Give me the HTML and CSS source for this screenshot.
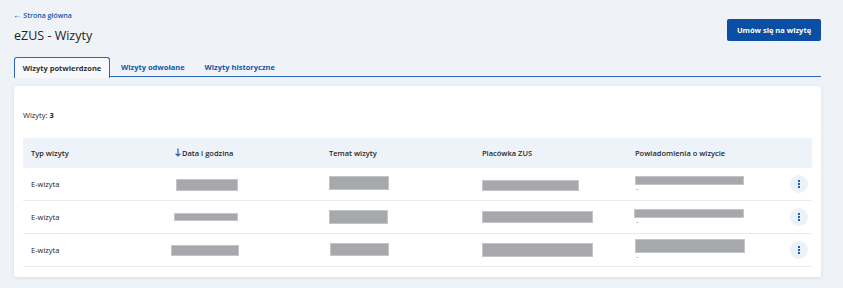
FILE: index.html
```html
<!DOCTYPE html>
<html lang="pl">
<head>
<meta charset="utf-8">
<title>eZUS - Wizyty</title>
<link rel="stylesheet" href="styles.css">
</head>
<body>
<div class="page">
  <div class="header">
    <div class="header-left">
      <a class="back" href="#"><span class="back-arrow">&#8592;</span> Strona główna</a>
      <h1 class="title">eZUS - Wizyty</h1>
    </div>
    <button class="primary">Umów się na wizytę</button>
  </div>

  <div class="tabs">
    <div class="tab active">Wizyty potwierdzone</div>
    <div class="tab">Wizyty odwołane</div>
    <div class="tab">Wizyty historyczne</div>
  </div>

  <div class="card">
    <div class="count">Wizyty: <b>3</b></div>
    <div class="table">
      <div class="row head">
        <div class="cell">Typ wizyty</div>
        <div class="cell sort"><svg class="sort-icon" width="6" height="9" viewBox="0 0 6 9"><path d="M3 0.5V8M0.6 5.6L3 8L5.4 5.6" fill="none" stroke="#1b5fb8" stroke-width="1.2"/></svg>Data i godzina</div>
        <div class="cell">Temat wizyty</div>
        <div class="cell">Placówka ZUS</div>
        <div class="cell">Powiadomienia o wizycie</div>
        <div class="cell"></div>
      </div>

      <div class="row">
        <div class="cell">E-wizyta</div>
        <div class="cell"><span class="redact" style="width:62px;height:12px;margin-top:2px"></span></div>
        <div class="cell"><span class="redact" style="width:60px;height:14px;margin-top:-2px"></span></div>
        <div class="cell"><span class="redact" style="width:97px;height:11px;margin-top:3px"></span></div>
        <div class="cell notif"><span class="redact" style="width:109px;height:9px"></span><span class="dash">-</span></div>
        <div class="cell act"><span class="kebab"><i></i><i></i><i></i></span></div>
      </div>

      <div class="row">
        <div class="cell">E-wizyta</div>
        <div class="cell"><span class="redact" style="width:64px;height:8px;margin-left:-2px;margin-top:1px"></span></div>
        <div class="cell"><span class="redact" style="width:59px;height:14px"></span></div>
        <div class="cell"><span class="redact" style="width:111px;height:12px;margin-top:1px"></span></div>
        <div class="cell notif"><span class="redact" style="width:110px;height:9px;margin-left:-1px"></span><span class="dash">-</span></div>
        <div class="cell act"><span class="kebab"><i></i><i></i><i></i></span></div>
      </div>

      <div class="row">
        <div class="cell">E-wizyta</div>
        <div class="cell"><span class="redact" style="width:68px;height:11px;margin-left:-5px;margin-top:1px"></span></div>
        <div class="cell"><span class="redact" style="width:59px;height:13px;margin-left:1px"></span></div>
        <div class="cell"><span class="redact" style="width:111px;height:14px"></span></div>
        <div class="cell notif"><span class="redact" style="width:110px;height:14px"></span><span class="dash">-</span></div>
        <div class="cell act"><span class="kebab"><i></i><i></i><i></i></span></div>
      </div>
    </div>
  </div>
</div>
</body>
</html>
```

FILE: styles.css
```css
* { box-sizing: border-box; }

html, body {
  margin: 0;
  padding: 0;
  background: #eff3f8;
  font-family: "Open Sans", "Noto Sans", sans-serif;
  color: #1e1e1e;
}

.page {
  padding: 9px 22px 12px 14px;
}

.header {
  display: flex;
  justify-content: space-between;
  align-items: flex-start;
}

.header-left {
  display: flex;
  flex-direction: column;
}

.back {
  font-size: 7px;
  line-height: 12px;
  color: #1456ac;
  text-decoration: none;
  font-weight: 600;
  margin-left: -1px;
}

.back-arrow {
  font-size: 8.5px;
}

.title {
  margin: 5px 0 0;
  font-size: 12.5px;
  line-height: 17px;
  font-weight: 500;
  color: #222;
}

.primary {
  margin-top: 10px;
  width: 94px;
  height: 22px;
  border: none;
  border-radius: 2px;
  background: #0a4fa3;
  color: #fff;
  font-family: inherit;
  font-size: 7.5px;
  font-weight: 700;
  padding: 0;
}

.tabs {
  display: flex;
  margin-top: 13px;
  border-bottom: 1.5px solid #2b67bd;
  height: 20px;
}

.tab {
  padding: 0 10px;
  height: 20px;
  display: flex;
  align-items: center;
  white-space: nowrap;
  font-size: 7.5px;
  font-weight: 700;
  color: #1456ac;
}

.tab.active {
  width: 96px;
  padding: 0;
  margin-right: 1px;
  justify-content: center;
  color: #333;
  border: 1px solid #2b67bd;
  border-bottom: none;
  border-radius: 3px 3px 0 0;
  height: 20.5px;
  background: #f7f9fc;
}

.card {
  margin-top: 8.5px;
  background: #fff;
  border-radius: 3px;
  box-shadow: 0 1px 4px rgba(40, 70, 120, 0.12);
  padding: 0 9px 10px;
}

.count {
  padding-top: 23px;
  font-size: 7.5px;
  line-height: 12px;
  color: #222;
}

.count b { font-weight: 700; }

.table {
  margin-top: 17px;
}

.row {
  display: grid;
  grid-template-columns: 145px 153px 153px 153px 1fr 36px;
  height: 33px;
  border-bottom: 1px solid #e7ecf3;
  align-items: center;
}

.row.head {
  height: 30px;
  background: #eef3f9;
  border-bottom: none;
}

.cell {
  padding-left: 8px;
  font-size: 7.5px;
  display: flex;
  align-items: center;
}

.head .cell {
  font-weight: 600;
  color: #2a2a2a;
}

.sort {
  margin-left: -1px;
}

.sort-icon {
  margin-right: 1px;
}

.redact {
  display: block;
  background: #a7a8ab;
  border: 1px solid #c4c5c8;
}

.notif {
  flex-direction: column;
  align-items: flex-start;
}

.dash {
  font-size: 7px;
  line-height: 6px;
  color: #777;
  margin-top: 1px;
  padding-left: 1px;
}

.act {
  justify-content: flex-end;
  padding-left: 0;
  padding-right: 4px;
}

.kebab {
  width: 18px;
  height: 18px;
  border-radius: 50%;
  background: #edf2f9;
  display: flex;
  flex-direction: column;
  align-items: center;
  justify-content: center;
  gap: 1px;
}

.kebab i {
  display: block;
  width: 2px;
  height: 2px;
  background: #1b5fb8;
}
```
